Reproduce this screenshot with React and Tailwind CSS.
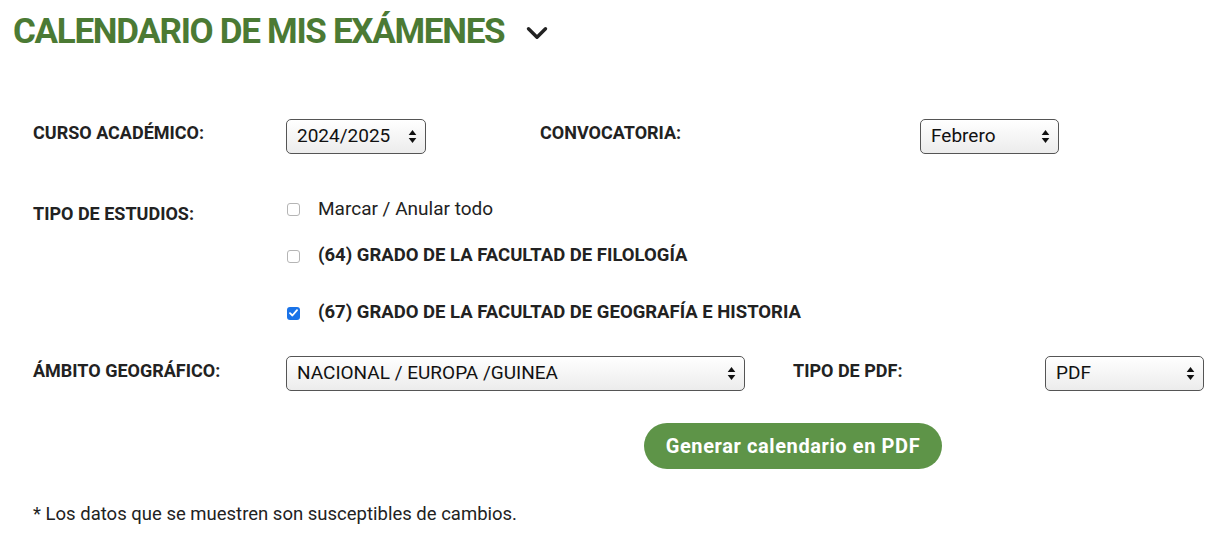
import { ChevronDown } from "lucide-react";

const font = { fontFamily: "Roboto, 'Noto Sans', sans-serif" };

function Arrows() {
  return (
    <svg width="9" height="15" viewBox="0 0 9 15" className="shrink-0">
      <path d="M4.5 1 L8.3 6 H0.7 Z" fill="#111" />
      <path d="M4.5 14 L8.3 9 H0.7 Z" fill="#111" />
    </svg>
  );
}

function Select({ value, className }) {
  return (
    <div
      className={`flex h-[35px] items-center justify-between rounded-[5px] border border-[#555] bg-gradient-to-b from-white to-[#ececec] pl-[10px] pr-[8px] text-[19px] text-[#111] shadow-[inset_0_1px_0_#fff] ${className}`}
    >
      <span>{value}</span>
      <Arrows />
    </div>
  );
}

function Check({ checked }) {
  return checked ? (
    <div className="flex h-[13px] w-[13px] shrink-0 items-center justify-center rounded-[3px] bg-[#1a73e8]">
      <svg width="9" height="8" viewBox="0 0 9 8">
        <path d="M1 4.2 L3.4 6.5 L8 1.2" stroke="#fff" strokeWidth="1.8" fill="none" strokeLinecap="round" strokeLinejoin="round" />
      </svg>
    </div>
  ) : (
    <div className="h-[13px] w-[13px] shrink-0 rounded-[3px] border border-[#b5b5b5] bg-white" />
  );
}

export default function App() {
  return (
    <main className="bg-white text-[#222]" style={font}>
      <div className="flex h-[64px] items-center gap-[16px] pl-[13px]">
        <h1 className="text-[35px] font-bold tracking-[-1.3px] text-[#4b7a34]">CALENDARIO DE MIS EXÁMENES</h1>
        <ChevronDown className="mt-[2px] h-[34px] w-[34px] text-[#222]" strokeWidth={2.4} />
      </div>

      <section className="pl-[33px] pt-[55px]">
        <div className="flex items-start">
          <div className="w-[253px] text-[18px] font-bold">CURSO ACADÉMICO:</div>
          <Select value="2024/2025" className="w-[140px]" />
          <div className="ml-[114px] w-[380px] text-[18px] font-bold">CONVOCATORIA:</div>
          <Select value="Febrero" className="w-[139px]" />
        </div>

        <div className="mt-[46px] flex items-start">
          <div className="w-[253px] text-[18px] font-bold">TIPO DE ESTUDIOS:</div>
          <div className="flex flex-col">
            <div className="flex h-[18px] items-center gap-[18px] pl-[1px]">
              <Check />
              <span className="text-[19px]">Marcar / Anular todo</span>
            </div>
            <div className="mt-[29px] flex h-[18px] items-center gap-[18px] pl-[1px]">
              <Check />
              <span className="text-[18.5px] font-bold">(64) GRADO DE LA FACULTAD DE FILOLOGÍA</span>
            </div>
            <div className="mt-[39px] flex h-[18px] items-center gap-[18px] pl-[1px]">
              <Check checked />
              <span className="text-[18.5px] font-bold">(67) GRADO DE LA FACULTAD DE GEOGRAFÍA E HISTORIA</span>
            </div>
          </div>
        </div>

        <div className="mt-[34px] flex items-start">
          <div className="w-[253px] pt-[1px] text-[18px] font-bold">ÁMBITO GEOGRÁFICO:</div>
          <Select value="NACIONAL / EUROPA /GUINEA" className="w-[459px]" />
          <div className="ml-[48px] w-[252px] pt-[1px] text-[18px] font-bold">TIPO DE PDF:</div>
          <Select value="PDF" className="w-[159px]" />
        </div>

        <div className="mt-[32px] flex pl-[611px]">
          <button className="h-[46px] w-[298px] rounded-full bg-[#5e9448] text-[20px] font-bold tracking-[0.6px] text-white">
            Generar calendario en PDF
          </button>
        </div>

        <p className="mt-[32px] text-[18.5px]">* Los datos que se muestren son susceptibles de cambios.</p>
      </section>
    </main>
  );
}
